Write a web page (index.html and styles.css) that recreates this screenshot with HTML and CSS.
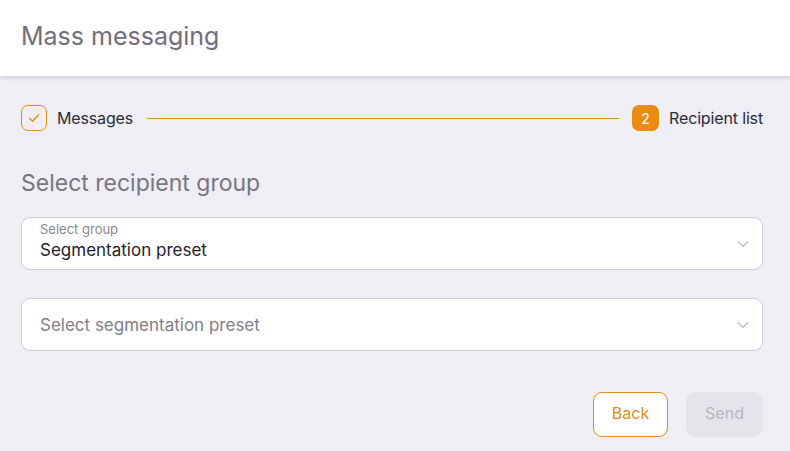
FILE: index.html
```html
<!DOCTYPE html>
<html>
<head>
<meta charset="utf-8">
<link rel="stylesheet" href="styles.css">
</head>
<body>
<header class="header">
  <h1 class="title">Mass messaging</h1>
</header>
<main class="content">
  <div class="stepper">
    <div class="step">
      <span class="step-check">
        <svg width="14" height="14" viewBox="0 0 14 14"><path d="M2.5 7.2 L5.6 10.2 L11.5 3.8" fill="none" stroke="#e88c14" stroke-width="1.3" stroke-linecap="round" stroke-linejoin="round"/></svg>
      </span>
      <span class="step-label">Messages</span>
    </div>
    <div class="step-line"></div>
    <div class="step">
      <span class="step-num">2</span>
      <span class="step-label">Recipient list</span>
    </div>
  </div>
  <h2 class="section-title">Select recipient group</h2>
  <div class="select filled">
    <div class="select-text top">
      <span class="select-label">Select group</span>
      <span class="select-value">Segmentation preset</span>
    </div>
    <svg class="chevron" width="12" height="8" viewBox="0 0 12 8"><path d="M1 1.5 L6 6.5 L11 1.5" fill="none" stroke="#b8b6c0" stroke-width="1.1"/></svg>
  </div>
  <div class="select">
    <div class="select-text">
      <span class="select-placeholder">Select segmentation preset</span>
    </div>
    <svg class="chevron" width="12" height="8" viewBox="0 0 12 8"><path d="M1 1.5 L6 6.5 L11 1.5" fill="none" stroke="#b8b6c0" stroke-width="1.1"/></svg>
  </div>
  <div class="actions">
    <button class="btn btn-back">Back</button>
    <button class="btn btn-send">Send</button>
  </div>
</main>
</body>
</html>
```
FILE: styles.css
```css
* { box-sizing: border-box; }
html, body { margin: 0; padding: 0; }
body {
  background: #eeeef4;
  font-family: Inter, "Noto Sans", sans-serif;
  width: 790px;
  height: 451px;
  overflow: hidden;
}
.header {
  background: #fff;
  height: 76px;
  box-shadow: 0 2px 4px rgba(60, 55, 80, 0.18);
  display: flex;
  align-items: center;
  padding-left: 21px;
  position: relative;
}
.title {
  margin: 0;
  font-size: 25px;
  font-weight: 400;
  color: #726e7c;
  margin-top: -4px;
}
.content {
  padding: 28px 27px 0 21px;
}
.stepper {
  display: flex;
  align-items: center;
  height: 28px;
}
.step { display: flex; align-items: center; }
.step-check {
  width: 26px; height: 26px;
  border: 1px solid #e88c14;
  border-radius: 7px;
  display: flex; align-items: center; justify-content: center;
}
.step-num {
  width: 27px; height: 26px;
  background: #e88c14;
  border-radius: 7px;
  color: #fff;
  font-size: 14px;
  display: flex; align-items: center; justify-content: center;
}
.step-label {
  margin-left: 10px;
  font-size: 16px;
  letter-spacing: -0.15px;
  color: #2b2a3a;
}
.step-line {
  flex: 1;
  height: 1px;
  background: #e88c14;
  margin: 0 13px 0 14px;
}
.section-title {
  margin: 37px 0 0;
  font-size: 23px;
  font-weight: 400;
  color: #787482;
  line-height: 28px;
}
.select {
  margin-top: 20px;
  height: 53px;
  background: #fff;
  border: 1px solid #cfcdd6;
  border-radius: 9px;
  display: flex;
  align-items: center;
  padding: 0 13px 0 18px;
}
.select + .select { margin-top: 28px; }
.select-text { flex: 1; display: flex; flex-direction: column; }
.select-text.top { align-self: flex-start; padding-top: 3px; }
.select-label { font-size: 13px; color: #8a8693; line-height: 16px; }
.select-value { font-size: 17px; color: #1f1e2c; line-height: 22px; margin-top: 2px; }
.select-placeholder { font-size: 17px; color: #817d89; line-height: 22px; }
.chevron { flex: none; }
.actions {
  display: flex;
  justify-content: flex-end;
  gap: 18px;
  margin-top: 41px;
}
.btn {
  height: 45px;
  border-radius: 9px;
  font-family: Inter, "Noto Sans", sans-serif;
  font-size: 16px;
  padding: 0 0 3px;
}
.btn-back {
  width: 75px;
  background: #fff;
  border: 1px solid #e88c14;
  color: #e88c14;
}
.btn-send {
  width: 77px;
  background: #e4e4ea;
  border: none;
  color: #b7b5bf;
}
```
